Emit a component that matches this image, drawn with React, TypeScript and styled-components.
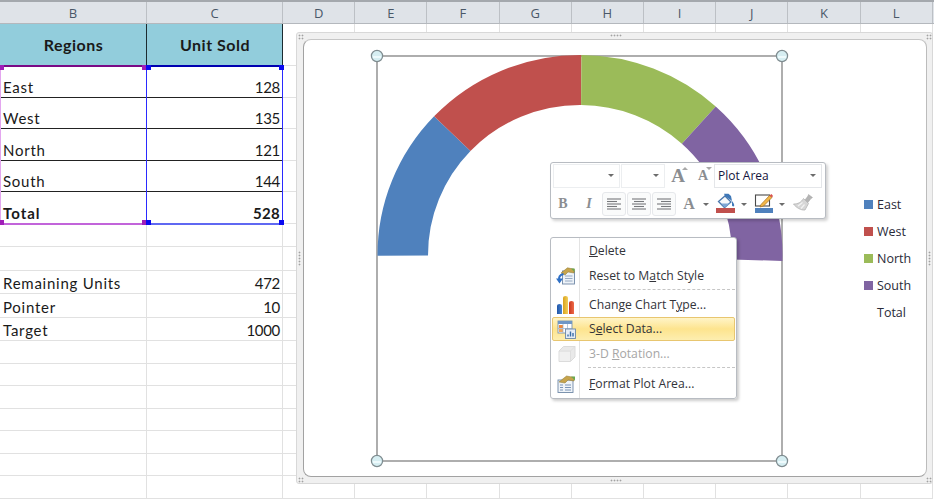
import React from "react";
import styled, { createGlobalStyle } from "styled-components";

const Global = createGlobalStyle`
  html, body { margin: 0; padding: 0; background: #fff; }
`;

const Page = styled.div`
  position: relative;
  width: 934px;
  height: 501px;
  overflow: hidden;
  background: #fff;
  font-family: Lato, "Liberation Sans", sans-serif;
`;

const COLS = "147px 136px repeat(9, 72.2px)";

const HeaderRow = styled.div`
  display: grid;
  grid-template-columns: ${COLS};
  height: 24px;
  box-sizing: border-box;
  border-top: 2px solid #a4a8ad;
  border-bottom: 1px solid #b4b8bd;
  background: #dfe3e8;
`;

const ColHead = styled.div`
  display: flex;
  align-items: center;
  justify-content: center;
  border-right: 1px solid #bcc0c5;
  font: 13px "Open Sans", sans-serif;
  color: #4a5868;
`;

const Row = styled.div<{ $h: number }>`
  display: grid;
  grid-template-columns: ${COLS};
  height: ${(p) => p.$h}px;
`;

const Cell = styled.div<{ $kind?: string; $right?: boolean; $bold?: boolean; $track?: number; $size?: number }>`
  box-sizing: border-box;
  display: flex;
  align-items: ${(p) => (p.$kind === "head" ? "center" : "flex-end")};
  justify-content: ${(p) => (p.$kind === "head" ? "center" : p.$right ? "flex-end" : "flex-start")};
  padding: 0 2px 0 3px;
  line-height: 19px;
  font-size: ${(p) => p.$size ?? 15}px;
  letter-spacing: ${(p) => p.$track ?? 0}px;
  font-weight: ${(p) => (p.$bold ? 700 : 400)};
  color: #1a1a1a;
  white-space: nowrap;
  background: ${(p) => (p.$kind === "head" ? "#92cddc" : "#fff")};
  border-right: 1px solid ${(p) => (p.$kind === "head" ? "#1c2b30" : "#e1e1e1")};
  border-bottom: ${(p) =>
    p.$kind === "head"
      ? "1px solid #1c2b30"
      : p.$kind === "table"
      ? "1px solid #222"
      : "1px solid #e1e1e1"};
`;

const Selection = styled.div<{ $left: number; $width: number; $side: string; $top: string; $bottom: string }>`
  position: absolute;
  box-sizing: border-box;
  left: ${(p) => p.$left}px;
  width: ${(p) => p.$width}px;
  top: 65px;
  height: 160px;
  border-top: 2px solid ${(p) => p.$top};
  border-bottom: 2px solid ${(p) => p.$bottom};
  border-left: 1.5px solid ${(p) => p.$side};
  border-right: 1.5px solid ${(p) => p.$side};
`;

const Handle = styled.i<{ $x: number; $y: number; $c: string }>`
  position: absolute;
  left: ${(p) => p.$x}px;
  top: ${(p) => p.$y}px;
  width: 5px;
  height: 5px;
  background: ${(p) => p.$c};
`;

const ChartFrame = styled.div`
  position: absolute;
  left: 296px;
  top: 32px;
  width: 637px;
  height: 452px;
  box-sizing: border-box;
  padding: 6px 5px 6px 6px;
  background: #f0f0f0;
  border: 1px solid #d8d8d8;
  border-radius: 3px;
`;

const Grip = styled.span<{ $w: number; $h: number; $x: string; $y: string }>`
  position: absolute;
  display: block;
  ${(p) => p.$x};
  ${(p) => p.$y};
  width: ${(p) => p.$w}px;
  height: ${(p) => p.$h}px;
  background-image: radial-gradient(circle, #a2a2a2 0.8px, transparent 1.1px);
  background-size: 3px 3px;
`;

const ChartBody = styled.div`
  display: flex;
  align-items: center;
  height: 100%;
  box-sizing: border-box;
  background: #fff;
  border-style: solid;
  border-width: 1px;
  border-color: #c6c6c6 #bcbcbc #a2a2a2 #a2a2a2;
  border-radius: 8px;
  padding-left: 65px;
`;

const PlotSvg = styled.svg`
  display: block;
  flex: none;
  align-self: flex-start;
  margin-top: 8px;
`;

const Legend = styled.ul`
  list-style: none;
  margin: 0 0 0 74px;
  padding: 0;
  display: flex;
  flex-direction: column;
  gap: 9px;
  font: 12.5px "Open Sans", sans-serif;
  color: #2a2a38;
`;

const LegendItem = styled.li`
  display: flex;
  align-items: center;
  gap: 4px;
  height: 18px;
`;

const Swatch = styled.i<{ $c?: string }>`
  width: 9px;
  height: 9px;
  background: ${(p) => p.$c ?? "transparent"};
`;

const MiniBar = styled.div`
  position: absolute;
  left: 550px;
  top: 162px;
  width: 276px;
  height: 57px;
  box-sizing: border-box;
  padding: 1px 2px;
  background: #fff;
  border: 1px solid #b8bcc2;
  border-radius: 3px;
  box-shadow: 2px 2px 3px rgba(0, 0, 0, 0.18);
  display: flex;
  flex-direction: column;
  gap: 4px;
`;

const BarRow = styled.div`
  display: flex;
  align-items: center;
  height: 24px;
`;

const Combo = styled.div<{ $w: number; $strong?: boolean; $ml?: number }>`
  box-sizing: border-box;
  width: ${(p) => p.$w}px;
  height: 24px;
  margin-left: ${(p) => p.$ml ?? 0}px;
  display: flex;
  align-items: center;
  justify-content: space-between;
  padding: 0 5px 2px 3px;
  border: 1px solid ${(p) => (p.$strong ? "#e4e6e9" : "#eceef0")};
  font: 12px "Open Sans", sans-serif;
  color: #14143c;
`;

const Caret = styled.i<{ $ml?: number; $mr?: number }>`
  display: block;
  flex: none;
  margin-left: ${(p) => p.$ml ?? 0}px;
  margin-right: ${(p) => p.$mr ?? 0}px;
  width: 0;
  height: 0;
  border-left: 3px solid transparent;
  border-right: 3px solid transparent;
  border-top: 3px solid #6c6c6c;
`;

const GlyphWrap = styled.span<{ $w: number; $ml?: number }>`
  position: relative;
  flex: none;
  display: flex;
  justify-content: center;
  align-items: center;
  width: ${(p) => p.$w}px;
  margin-left: ${(p) => p.$ml ?? 0}px;
`;

const SerifGlyph = styled.span<{ $size: number; $italic?: boolean }>`
  font-family: "Liberation Serif", serif;
  font-size: ${(p) => p.$size}px;
  font-weight: 700;
  font-style: ${(p) => (p.$italic ? "italic" : "normal")};
  line-height: 20px;
  color: #8a8d91;
`;

const Tick = styled.i<{ $down?: boolean }>`
  position: absolute;
  right: 0;
  top: 1px;
  width: 0;
  height: 0;
  border-left: 3px solid transparent;
  border-right: 3px solid transparent;
  ${(p) => (p.$down ? "border-top: 3px solid #a8a8a8;" : "border-bottom: 3px solid #a8a8a8;")}
`;

const AlignBtn = styled.span<{ $ml?: number }>`
  flex: none;
  box-sizing: border-box;
  width: 24px;
  height: 24px;
  margin-left: ${(p) => p.$ml ?? 0}px;
  display: flex;
  align-items: center;
  justify-content: center;
  border: 1px solid #e6e8eb;
  border-radius: 3px;
  background: #fafbfb;
`;

const IconSlot = styled.span<{ $ml?: number }>`
  display: flex;
  flex: none;
  margin-left: ${(p) => p.$ml ?? 0}px;
`;

const Menu = styled.div`
  position: absolute;
  left: 550px;
  top: 237px;
  width: 187px;
  height: 162px;
  box-sizing: border-box;
  padding: 1px;
  background: linear-gradient(to right, #fff 28px, #e3e3e3 28px, #e3e3e3 29px, #fff 29px);
  border: 1px solid #b8bcc2;
  border-radius: 3px;
  box-shadow: 2px 2px 3px rgba(0, 0, 0, 0.2);
`;

const Item = styled.div<{ $active?: boolean; $off?: boolean; $mt?: number }>`
  box-sizing: border-box;
  height: 24px;
  margin-top: ${(p) => p.$mt ?? 0}px;
  display: flex;
  align-items: center;
  font: 12.2px "Open Sans", sans-serif;
  color: ${(p) => (p.$off ? "#a6a6a6" : "#33343a")};
  border-radius: 2px;
  border: 1px solid ${(p) => (p.$active ? "#e8c670" : "transparent")};
  background: ${(p) => (p.$active ? "linear-gradient(#fff4c8, #fde48e 50%, #fdeeb0)" : "transparent")};
`;

const ItemIcon = styled.span`
  flex: none;
  width: 26px;
  display: flex;
  justify-content: center;
  margin-right: 10px;
`;

const ItemLabel = styled.span`
  padding-bottom: 1px;
`;

const Sep = styled.div`
  margin: 1px 0 0 36px;
  height: 0;
  border-top: 1px dashed #c6c6c6;
`;

const Key = styled.span`
  text-decoration: underline;
`;

const COLORS = { East: "#4f81bd", West: "#c0504d", North: "#9bbb59", South: "#8064a2" };

const letters = ["B", "C", "D", "E", "F", "G", "H", "I", "J", "K", "L"];

type R = { h: number; b?: string; c?: string; kind?: string; bold?: boolean };
const rows: R[] = [
  { h: 42, b: "Regions", c: "Unit Sold", kind: "head", bold: true },
  { h: 32, b: "East", c: "128", kind: "table" },
  { h: 31, b: "West", c: "135", kind: "table" },
  { h: 32, b: "North", c: "121", kind: "table" },
  { h: 31, b: "South", c: "144", kind: "table" },
  { h: 32, b: "Total", c: "528", kind: "table", bold: true },
  { h: 23 },
  { h: 24 },
  { h: 23, b: "Remaining Units", c: "472" },
  { h: 24, b: "Pointer", c: "10" },
  { h: 23, b: "Target", c: "1000" },
  { h: 23 },
  { h: 22 },
  { h: 23 },
  { h: 22 },
  { h: 23 },
  { h: 22 },
  { h: 23 },
];

function arc(a0: number, a1: number) {
  const cx = 211, cy = 207;
  const P = (rx: number, ry: number, a: number) => {
    const t = (a * Math.PI) / 180;
    return `${(cx - rx * Math.cos(t)).toFixed(2)} ${(cy - ry * Math.sin(t)).toFixed(2)}`;
  };
  return `M${P(202.5, 200, a0)} A202.5 200 0 0 1 ${P(202.5, 200, a1)} L${P(152, 150, a1)} A152 150 0 0 0 ${P(152, 150, a0)} Z`;
}

const slices = [
  { v: 128, c: COLORS.East },
  { v: 135, c: COLORS.West },
  { v: 121, c: COLORS.North },
  { v: 144, c: COLORS.South },
];

function Plot() {
  let a = -0.2;
  const k = 181.9 / 528;
  const corners = [
    [8, 8],
    [413, 8],
    [8, 413],
    [413, 413],
  ];
  return (
    <PlotSvg width="421" height="421" viewBox="0 0 421 421">
      <rect x="8" y="8" width="405" height="405" fill="none" stroke="#8c8c8c" strokeWidth="1.4" />
      {slices.map((s) => {
        const a0 = a;
        a += s.v * k;
        return <path key={s.c} d={arc(a0, a)} fill={s.c} />;
      })}
      {corners.map(([x, y]) => (
        <g key={`${x}${y}`}>
          <circle cx={x} cy={y} r="5.6" fill="#d6eef2" stroke="#7f8c90" strokeWidth="1.2" />
          <path d={`M${x - 4} ${y + 1}h8`} stroke="#eefafc" strokeWidth="2" />
        </g>
      ))}
    </PlotSvg>
  );
}

const AlignIcon = ({ mode }: { mode: "l" | "c" | "r" }) => {
  const ys = [4, 6.5, 9, 11.5, 14];
  const ws = [14, 10, 14, 10, 14];
  return (
    <svg width="18" height="18" viewBox="0 0 18 18">
      {ys.map((y, i) => {
        const x = mode === "l" ? 2 : mode === "r" ? 16 - ws[i] : 9 - ws[i] / 2;
        return <path key={y} d={`M${x} ${y}h${ws[i]}`} stroke="#77797c" strokeWidth="1.1" />;
      })}
    </svg>
  );
};

const FillIcon = () => (
  <svg width="20" height="22" viewBox="0 0 20 22">
    <path d="M2.500 8.500 9 3l6 6-6.500 5.500z" fill="#f6f8fa" stroke="#4b78ad" strokeWidth="1.300" />
    <path d="M5 10.500h9l-5.500 4z" fill="#7ea6d4" />
    <path d="M9 3 8 .8h4.500L15 3l1 5c1.300 1.500 2.500 3.500 2.200 4.700-.5 1.200-2.200 1-2.200-.7V8z" fill="#3f78b8" />
    <rect x="0" y="15" width="19" height="5" fill="#c0504d" />
  </svg>
);

const PenIcon = () => (
  <svg width="20" height="22" viewBox="0 0 20 22">
    <rect x="1.500" y="2" width="14" height="11" fill="#fff" stroke="#4a4a4a" strokeWidth="1.100" />
    <path d="M7 11.500 15.500 2.500l2.500 2-8.500 8.500-3.500 1z" fill="#f1b648" stroke="#a8701c" strokeWidth="0.7" />
    <path d="M15.500 2.500l2.500 2 1-1.500-1.500-2z" fill="#d9534f" />
    <rect x="1" y="15" width="18" height="5" fill="#4f81bd" />
  </svg>
);

const BrushIcon = () => (
  <svg width="20" height="20" viewBox="0 0 20 20">
    <path d="M12 6 15 2 15.500.5 19.500 3.500 18 4.500 14.500 9z" fill="#b4b4b4" stroke="#a0a0a0" strokeWidth="0.5" />
    <path d="M10.500 4.500 15.500 9.500 12 16C8 16.500 3 13.500 .5 10 5 10 8 8.500 10.500 4.500z" fill="#d6d6d6" stroke="#b4b4b4" strokeWidth="0.8" />
    <path d="M5 12 9.500 8.500M8 14.500l3.500-4" stroke="#f2f2f2" strokeWidth="1.300" />
  </svg>
);

const ResetIcon = () => (
  <svg width="20" height="18" viewBox="0 0 20 18">
    <rect x="6.500" y="4" width="12" height="13" fill="#eef3f8" stroke="#6f88a6" strokeWidth="0.9" />
    <path d="M9 9h7.500M9 11.500h7.500M9 14h7.500" stroke="#8da3bd" strokeWidth="0.9" />
    <path d="M5 6 11.500 .8l7 1.500-.5 3.700-6-1-3 3z" fill="#c7a44c" stroke="#8b7630" strokeWidth="0.5" />
    <path d="M15 1.500h3.500v3.500z" fill="#6aa84f" />
    <path d="M7.500 7C3.500 8 2.500 10.500 3.500 12.500" fill="none" stroke="#2f70c6" strokeWidth="2" />
    <path d="M0 11.500h7L3.500 16.500z" fill="#2f70c6" />
  </svg>
);

const BarsIcon = () => (
  <svg width="20" height="20" viewBox="0 0 20 20">
    <defs>
      <linearGradient id="bb" x1="0" x2="1"><stop offset="0" stopColor="#1f55a8" /><stop offset="1" stopColor="#4a86d0" /></linearGradient>
      <linearGradient id="bg" x1="0" x2="1"><stop offset="0" stopColor="#d9a21c" /><stop offset="1" stopColor="#f3cf5a" /></linearGradient>
      <linearGradient id="br" x1="0" x2="1"><stop offset="0" stopColor="#c9371d" /><stop offset="1" stopColor="#ee6a48" /></linearGradient>
    </defs>
    <path d="M1 19V10.500q0-1.500 2.500-1.500T6 10.500V19z" fill="url(#bb)" />
    <path d="M7 19V2.500Q7 1 9.500 1t2.500 1.500V19z" fill="url(#bg)" />
    <path d="M13 19V7.500Q13 6 15.500 6T18 7.500V19z" fill="url(#br)" />
  </svg>
);

const TableIcon = () => (
  <svg width="19" height="19" viewBox="0 0 19 19">
    <rect x="1" y="1" width="14" height="12" fill="#fff" stroke="#7a93b0" strokeWidth="0.9" />
    <rect x="1" y="1" width="14" height="3" fill="#6f97c6" />
    <path d="M2 5h4v3H2z" fill="#ec8a3c" />
    <path d="M2 9h4v3H2z" fill="#f0a860" />
    <path d="M6 4v9M10.500 4v9M1 8.500h14" stroke="#9ab0c8" strokeWidth="0.7" />
    <rect x="8.500" y="9" width="10" height="9.500" fill="#e6edf6" stroke="#6d88a8" strokeWidth="0.9" />
    <path d="M11 16.500v-2M13.500 16.500v-5M16 16.500v-3.500" stroke="#3a6ea8" strokeWidth="1.400" />
  </svg>
);

const CubeIcon = () => (
  <svg width="19" height="18" viewBox="0 0 19 18">
    <path d="M2 6 6.500 1.500H18V12l-4.500 4.500H2z" fill="#e9e9e9" stroke="#d8d8d8" strokeWidth="0.9" />
    <rect x="2.500" y="6.500" width="10.500" height="9.500" fill="#f0f0f0" />
    <path d="M2 6h11.500v10.500M13.500 6 18 1.500" fill="none" stroke="#dcdcdc" strokeWidth="0.9" />
  </svg>
);

const FormatIcon = () => (
  <svg width="20" height="18" viewBox="0 0 20 18">
    <rect x="2" y="5" width="15" height="12.500" fill="#eef3f8" stroke="#6f88a6" strokeWidth="0.9" />
    <path d="M4 10h3M9 10h6M4 12.500h3M9 12.500h6M4 15h3M9 15h6" stroke="#6c8ab0" strokeWidth="0.9" />
    <path d="M3 7 10.500 1l8 1.500-.5 3.500-6-1-3 3z" fill="#c7a44c" stroke="#8b7630" strokeWidth="0.5" />
    <path d="M15 1.500h4v4z" fill="#6aa84f" />
  </svg>
);

export default function App() {
  return (
    <Page>
      <Global />
      <HeaderRow>
        {letters.map((l) => (
          <ColHead key={l}>{l}</ColHead>
        ))}
      </HeaderRow>
      {rows.map((r, i) => (
        <Row key={i} $h={r.h}>
          <Cell $kind={r.kind} $bold={r.bold} $size={r.kind === "head" ? 16 : 15} $track={r.kind === "head" ? 0.5 : r.bold ? 1 : 0.75}>{r.b}</Cell>
          <Cell $kind={r.kind} $bold={r.bold} $right $size={r.kind === "head" ? 16 : 15} $track={r.kind === "head" ? 0.5 : r.bold ? 0.3 : -0.3}>{r.c}</Cell>
          {letters.slice(2).map((l) => (
            <Cell key={l} />
          ))}
        </Row>
      ))}

      <Selection $left={0} $width={147} $side="#e3a6ef" $top="#7a0a86" $bottom="#c264da" />
      <Selection $left={146} $width={137} $side="#2a2aff" $top="#0000b0" $bottom="#5f68f2" />
      {[
        [-1, 65, "#a01fb8"],
        [142, 65, "#a01fb8"],
        [-1, 220, "#a01fb8"],
        [142, 220, "#a01fb8"],
        [146, 65, "#0a0af0"],
        [279, 65, "#0a0af0"],
        [146, 220, "#0a0af0"],
        [279, 220, "#0a0af0"],
      ].map(([x, y, c], i) => (
        <Handle key={i} $x={x as number} $y={y as number} $c={c as string} />
      ))}

      <ChartFrame>
        <Grip $w={12} $h={3} $x="left: 313px" $y="top: 1px" />
        <Grip $w={12} $h={3} $x="left: 313px" $y="bottom: 1px" />
        <Grip $w={3} $h={15} $x="left: 1px" $y="top: 218px" />
        <Grip $w={3} $h={15} $x="right: 1px" $y="top: 218px" />
        <Grip $w={6} $h={6} $x="left: 1px" $y="top: 1px" />
        <Grip $w={6} $h={6} $x="right: 0" $y="top: 1px" />
        <Grip $w={6} $h={6} $x="left: 1px" $y="bottom: 0" />
        <Grip $w={6} $h={6} $x="right: 0" $y="bottom: 0" />
        <ChartBody>
          <Plot />
          <Legend>
            {Object.entries(COLORS).map(([k, c]) => (
              <LegendItem key={k}>
                <Swatch $c={c} />
                {k}
              </LegendItem>
            ))}
            <LegendItem>
              <Swatch />
              Total
            </LegendItem>
          </Legend>
        </ChartBody>
      </ChartFrame>

      <MiniBar>
        <BarRow>
          <Combo $w={67}><span /><Caret /></Combo>
          <Combo $w={44} $ml={1}><span /><Caret /></Combo>
          <GlyphWrap $w={20} $ml={3}><SerifGlyph $size={19}>A</SerifGlyph><Tick /></GlyphWrap>
          <GlyphWrap $w={18} $ml={6}><SerifGlyph $size={14}>A</SerifGlyph><Tick $down /></GlyphWrap>
          <Combo $w={108} $strong $ml={2}>Plot Area<Caret /></Combo>
        </BarRow>
        <BarRow>
          <GlyphWrap $w={16} $ml={2}><SerifGlyph $size={14}>B</SerifGlyph></GlyphWrap>
          <GlyphWrap $w={16} $ml={10}><SerifGlyph $size={14} $italic>I</SerifGlyph></GlyphWrap>
          <AlignBtn $ml={5}><AlignIcon mode="l" /></AlignBtn>
          <AlignBtn $ml={1}><AlignIcon mode="c" /></AlignBtn>
          <AlignBtn $ml={1}><AlignIcon mode="r" /></AlignBtn>
          <GlyphWrap $w={16} $ml={5}><SerifGlyph $size={16}>A</SerifGlyph></GlyphWrap>
          <Caret $ml={6} />
          <IconSlot $ml={7}><FillIcon /></IconSlot>
          <Caret $ml={5} />
          <IconSlot $ml={7}><PenIcon /></IconSlot>
          <Caret $ml={5} />
          <IconSlot $ml={8}><BrushIcon /></IconSlot>
        </BarRow>
      </MiniBar>

      <Menu>
        <Item><ItemIcon /><ItemLabel><Key>D</Key>elete</ItemLabel></Item>
        <Item $mt={1}><ItemIcon><ResetIcon /></ItemIcon><ItemLabel>Reset to M<Key>a</Key>tch Style</ItemLabel></Item>
        <Sep />
        <Item $mt={3}><ItemIcon><BarsIcon /></ItemIcon><ItemLabel>Change Chart T<Key>y</Key>pe...</ItemLabel></Item>
        <Item $active><ItemIcon><TableIcon /></ItemIcon><ItemLabel>S<Key>e</Key>lect Data...</ItemLabel></Item>
        <Item $off $mt={1}><ItemIcon><CubeIcon /></ItemIcon><ItemLabel>3-D <Key>R</Key>otation...</ItemLabel></Item>
        <Sep />
        <Item $mt={4}><ItemIcon><FormatIcon /></ItemIcon><ItemLabel><Key>F</Key>ormat Plot Area...</ItemLabel></Item>
      </Menu>
    </Page>
  );
}
